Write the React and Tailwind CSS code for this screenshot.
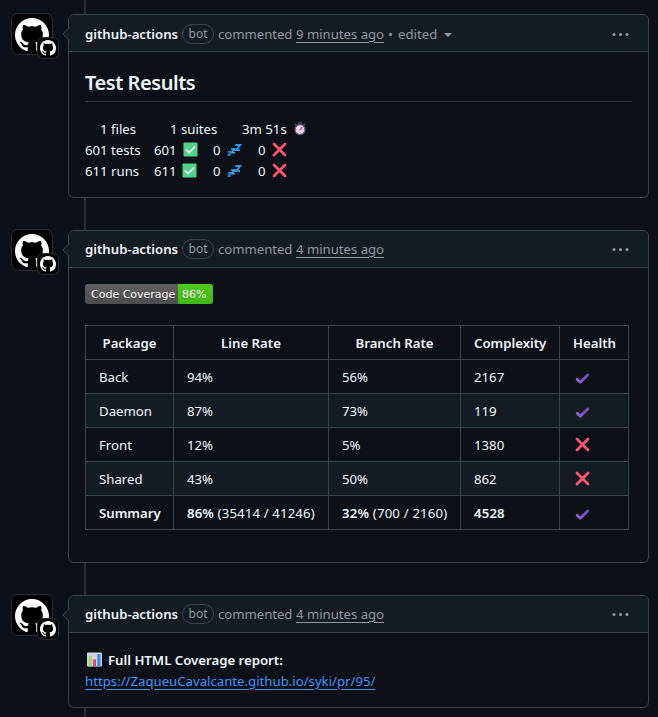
import React from "react";

const MARK =
  "M8 0C3.58 0 0 3.58 0 8c0 3.54 2.29 6.53 5.47 7.59.4.07.55-.17.55-.38 0-.19-.01-.82-.01-1.49-2.01.37-2.53-.49-2.69-.94-.09-.23-.48-.94-.82-1.13-.28-.15-.68-.52-.01-.53.63-.01 1.08.58 1.23.82.72 1.21 1.87.87 2.33.66.07-.52.28-.87.51-1.07-1.78-.2-3.64-.89-3.64-3.95 0-.87.31-1.59.82-2.15-.08-.2-.36-1.02.08-2.12 0 0 .67-.21 2.2.82.64-.18 1.32-.27 2-.27s1.36.09 2 .27c1.53-1.04 2.2-.82 2.2-.82.44 1.1.16 1.92.08 2.12.51.56.82 1.27.82 2.15 0 3.07-1.87 3.75-3.65 3.95.29.25.54.73.54 1.48 0 1.07-.01 1.93-.01 2.2 0 .21.15.46.55.38A8.01 8.01 0 0 0 16 8c0-4.42-3.58-8-8-8Z";

function Mark({ className }) {
  return (
    <svg viewBox="0 0 16 16" className={className} fill="#fff">
      <path d={MARK} />
    </svg>
  );
}

function Avatar() {
  return (
    <div className="relative -mt-px ml-[11px] h-[42px] w-[42px] rounded-[7px] border border-[#2a2e34] bg-black">
      <Mark className="ml-[3px] mt-[4px] h-[34px] w-[34px]" />
      <div className="absolute left-[25px] top-[23px] flex h-[22px] w-[22px] items-center justify-center rounded-[6px] border border-[#2a2e34] bg-black">
        <Mark className="h-4 w-4" />
      </div>
    </div>
  );
}

function Comment({ time, edited, children, className, headerPad = "pb-px" }) {
  return (
    <section className="flex">
      <div className="w-[68px] shrink-0">
        <Avatar />
      </div>
      <div className={"relative w-[581px] rounded-[6px] border border-[#3d444d] bg-[#0d1117] " + className}>
        <svg className="absolute -left-[7px] top-[11px] h-4 w-[8px]" viewBox="0 0 8 16">
          <path d="M8 0.5 L1 8 L8 15.5Z" fill="#151b23" />
          <path d="M7.5 1 L1 8 L7.5 15" fill="none" stroke="#3d444d" />
        </svg>
        <header className={"flex h-[37px] items-center rounded-t-[5px] border-b border-[#3d444d] bg-[#151b23] pl-4 pr-[19px] text-[13.2px] text-[#9198a1] " + headerPad}>
          <span className="w-[97px] font-semibold text-[#f0f6fc]">github-actions</span>
          <span className="flex h-5 w-8 items-center justify-center rounded-full border border-[#3d444d] text-[12px]">bot</span>
          <span className="ml-1 w-[78px] tracking-[-0.05px]">commented</span>
          <span className="tracking-[-0.03px] underline underline-offset-[3px]">{time}</span>
          {edited && (
            <>
              <span className="ml-[4px]">•</span>
              <span className="ml-[5px]">edited</span>
              <svg className="ml-[7px] mt-[3px] h-1 w-2" viewBox="0 0 8 4">
                <path d="M0 0H8L4 4Z" fill="#9198a1" />
              </svg>
            </>
          )}
          <svg className="ml-auto h-4 w-[17px]" viewBox="0 0 17 16" fill="#9198a1">
            <circle cx="2" cy="8.5" r="1.5" />
            <circle cx="8.5" cy="8.5" r="1.5" />
            <circle cx="15" cy="8.5" r="1.5" />
          </svg>
        </header>
        {children}
      </div>
    </section>
  );
}

function Rail({ className }) {
  return <div className={"ml-[84px] w-[2px] bg-[#2b3038] " + className} />;
}

function Green() {
  return (
    <svg className="h-[15px] w-[15px]" viewBox="0 0 15 15">
      <rect x="0.5" y="0.5" width="14" height="14" rx="1" fill="#53d18a" />
      <path d="M3 7.5L6 10.5L12 4.5" fill="none" stroke="#f4fff8" strokeWidth="1.7" />
    </svg>
  );
}

function Cross({ className = "" }) {
  return (
    <svg className={"h-[15px] w-[15px] " + className} viewBox="0 0 15 15">
      <path d="M2 2L13 13M13 2L2 13" fill="none" stroke="#fb5572" strokeWidth="2.8" strokeLinecap="round" />
    </svg>
  );
}

function Check() {
  return (
    <svg className="mt-[2px] h-[15px] w-[15px]" viewBox="0 0 15 15">
      <defs>
        <linearGradient id="chk" x1="0" y1="0" x2="1" y2="0">
          <stop offset="0" stopColor="#8f62d8" />
          <stop offset="1" stopColor="#7050ba" />
        </linearGradient>
      </defs>
      <path d="M2.2 8.2L5.2 11.2L12.8 4" fill="none" stroke="url(#chk)" strokeWidth="2.8" strokeLinecap="round" strokeLinejoin="round" />
    </svg>
  );
}

function Zzz() {
  return (
    <svg className="h-[14px] w-[15px]" viewBox="0 0 15 14" fill="none">
      <path d="M8.3 2H13.3L9 7.2H13" stroke="#2f97f0" strokeWidth="1.8" />
      <path d="M4 6H7.6L4.6 9.8H8" stroke="#36b8ee" strokeWidth="1.5" />
      <path d="M0.8 8.8H3.6L1.2 12H4" stroke="#3b83d8" strokeWidth="1.4" />
    </svg>
  );
}

function Stopwatch() {
  return (
    <svg className="h-[15px] w-[14px]" viewBox="0 0 14 15">
      <rect x="5" y="0.5" width="4" height="2.5" rx="0.5" fill="#3a2e4c" />
      <path d="M2 2.8L3.6 4.4M12 2.8L10.4 4.4" stroke="#55456c" strokeWidth="1.6" />
      <circle cx="7" cy="8.6" r="5" fill="#e6dfec" stroke="#65557c" strokeWidth="1.3" />
      <path d="M7 5V5.8M7 11.4V12.2M3.5 8.6H4.3M9.8 8.6H10.6" stroke="#8e82a0" strokeWidth="0.8" />
      <path d="M6.3 9.3L9.4 6.2" stroke="#e8365d" strokeWidth="1.2" />
    </svg>
  );
}

function Chart() {
  return (
    <svg className="h-[15px] w-[15px]" viewBox="0 0 15 15">
      <rect x="0" y="0.5" width="15" height="14" rx="1.2" fill="#d9d2e2" />
      <path d="M0 4H15M0 7.5H15M0 11H15" stroke="#c3bacd" strokeWidth="0.5" />
      <rect x="1.8" y="4" width="3" height="10.5" fill="#8fe468" />
      <rect x="6" y="7.5" width="3" height="7" fill="#ec3d7c" />
      <rect x="10.3" y="2" width="3.2" height="12.5" fill="#3390e6" />
    </svg>
  );
}

function ResultRow({ name, count, shift }) {
  return (
    <div className="flex h-[21px] items-center">
      <span className="w-[69px]">{name}</span>
      <span className="w-[29px]">{count}</span>
      <span className={shift}><Green /></span>
      <span className="w-[14px]">0</span>
      <span className="w-[31px]"><Zzz /></span>
      <span className="w-[14px]">0</span>
      <Cross />
    </div>
  );
}

const rows = [
  ["Back", "94%", "56%", "2167", true],
  ["Daemon", "87%", "73%", "119", true],
  ["Front", "12%", "5%", "1380", false],
  ["Shared", "43%", "50%", "862", false],
];

const cell = "h-[34px] border-b border-r border-[#3d444d] px-[13px] pb-0 pt-px ";

export default function App() {
  return (
    <main className="h-[717px] w-[658px] overflow-hidden whitespace-nowrap bg-[#0d1117] font-['Noto_Sans','Open_Sans',sans-serif] text-[13.2px] leading-5 text-[#f0f6fc]">
      <Rail className="h-[14px]" />
      <Comment time="9 minutes ago" edited className="h-[184px]" headerPad="pt-px">
        <div className="px-4">
          <h2 className="h-[50px] border-b border-[#2f353d] pt-[17px] text-[20px] font-semibold leading-[28px] tracking-[-0.45px]">Test Results</h2>
          <div className="mt-[16px]">
            <div className="flex h-[21px] items-center">
              <span className="ml-[15px] w-[70px]">1 files</span>
              <span className="w-[72px]">1 suites</span>
              <span className="w-[51px]">3m 51s</span>
              <Stopwatch />
            </div>
            <ResultRow name="601 tests" count="601" shift="w-[30px]" />
            <ResultRow name="611 runs" count="611" shift="-ml-px w-[31px]" />
          </div>
        </div>
      </Comment>
      <Rail className="h-8" />
      <Comment time="4 minutes ago" className="h-[333px]">
        <div className="px-4 pt-4">
          <div className="flex h-5 w-[128px] overflow-hidden rounded-[3px] font-['DejaVu_Sans',Verdana,sans-serif] text-[11px] leading-[21px] text-white [text-shadow:0_1px_0_rgba(1,1,1,0.3)]">
            <span className="w-[93px] bg-linear-to-b from-[#5f5f5f] to-[#4d4d4d] pl-[6px]">Code Coverage</span>
            <span className="w-[35px] bg-linear-to-b from-[#4fc921] to-[#3fb911] pl-1">86%</span>
          </div>
          <table className="mt-[21px] w-[544px] table-fixed border-separate border-spacing-0 border-l border-t border-[#3d444d] text-left">
            <colgroup>
              <col className="w-[88px]" />
              <col className="w-[155px]" />
              <col className="w-[132px]" />
              <col className="w-[99px]" />
              <col className="w-[69px]" />
            </colgroup>
            <thead>
              <tr>
                {["Package", "Line Rate", "Branch Rate", "Complexity", "Health"].map((h) => (
                  <th key={h} className={cell + "text-center font-semibold"}>{h}</th>
                ))}
              </tr>
            </thead>
            <tbody>
              {rows.map(([name, line, branch, complexity, ok], i) => (
                <tr key={name} className={i % 2 ? "bg-[#151b23]" : ""}>
                  <td className={cell}>{name}</td>
                  <td className={cell}>{line}</td>
                  <td className={cell}>{branch}</td>
                  <td className={cell}>{complexity}</td>
                  <td className={cell + "pl-[15px]"}>{ok ? <Check /> : <Cross className="mb-[2px]" />}</td>
                </tr>
              ))}
              <tr>
                <td className={cell + "font-semibold"}>Summary</td>
                <td className={cell + "tracking-[0.14px]"}><b className="font-semibold">86%</b> (35414 / 41246)</td>
                <td className={cell + "tracking-[0.18px]"}><b className="font-semibold">32%</b> (700 / 2160)</td>
                <td className={cell + "font-semibold tracking-[0.15px]"}>4528</td>
                <td className={cell + "pl-[15px]"}><Check /></td>
              </tr>
            </tbody>
          </table>
        </div>
      </Comment>
      <Rail className="h-8" />
      <Comment time="4 minutes ago" className="h-[113px]">
        <div className="px-4 pt-[16px]">
          <div className="flex h-[21px] items-center">
            <span className="ml-[2px] mr-[6px]"><Chart /></span>
            <span className="font-semibold">Full HTML Coverage report:</span>
          </div>
          <div className="flex h-[21px] items-center">
            <a className="text-[#4493f8] underline underline-offset-[3px]">https://ZaqueuCavalcante.github.io/syki/pr/95/</a>
          </div>
        </div>
      </Comment>
      <Rail className="h-[9px]" />
    </main>
  );
}
